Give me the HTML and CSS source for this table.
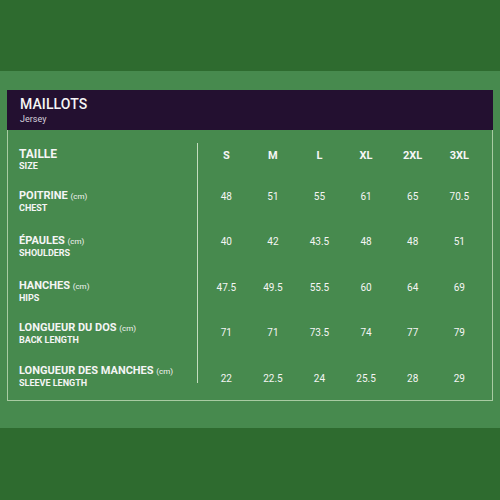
FILE: index.html
```html
<!DOCTYPE html>
<html lang="fr">
<head>
<meta charset="utf-8">
<title>Maillots</title>
<link rel="stylesheet" href="styles.css">
</head>
<body>
<div class="band">
  <div class="card">
    <div class="head">
      <div class="title">MAILLOTS</div>
      <div class="subtitle">Jersey</div>
    </div>
    <div class="table">
      <div class="label r0"><div class="main big">TAILLE</div><div class="sub">SIZE</div></div>
      <div class="divider"></div>
      <div class="size">S</div><div class="size">M</div><div class="size">L</div><div class="size">XL</div><div class="size">2XL</div><div class="size">3XL</div>

      <div class="label r1"><div class="main">POITRINE <span class="unit">(cm)</span></div><div class="sub">CHEST</div></div>
      <div class="val">48</div><div class="val">51</div><div class="val">55</div><div class="val">61</div><div class="val">65</div><div class="val">70.5</div>

      <div class="label r2"><div class="main">ÉPAULES <span class="unit">(cm)</span></div><div class="sub">SHOULDERS</div></div>
      <div class="val">40</div><div class="val">42</div><div class="val">43.5</div><div class="val">48</div><div class="val">48</div><div class="val">51</div>

      <div class="label r3"><div class="main">HANCHES <span class="unit">(cm)</span></div><div class="sub">HIPS</div></div>
      <div class="val">47.5</div><div class="val">49.5</div><div class="val">55.5</div><div class="val">60</div><div class="val">64</div><div class="val">69</div>

      <div class="label r4"><div class="main">LONGUEUR DU DOS <span class="unit">(cm)</span></div><div class="sub">BACK LENGTH</div></div>
      <div class="val">71</div><div class="val">71</div><div class="val">73.5</div><div class="val">74</div><div class="val">77</div><div class="val">79</div>

      <div class="label r5"><div class="main">LONGUEUR DES MANCHES <span class="unit">(cm)</span></div><div class="sub">SLEEVE LENGTH</div></div>
      <div class="val">22</div><div class="val">22.5</div><div class="val">24</div><div class="val">25.5</div><div class="val">28</div><div class="val">29</div>
    </div>
  </div>
</div>
</body>
</html>
```
FILE: styles.css
```css
html, body {
  margin: 0;
  padding: 0;
}
body {
  width: 500px;
  height: 500px;
  background: #2e6b2f;
  font-family: Roboto, "Liberation Sans", sans-serif;
  color: #f5f5f5;
  overflow: hidden;
}
.band {
  margin-top: 71px;
  height: 357px;
  background: #478a4e;
  padding: 19px 7px 0 7px;
  box-sizing: border-box;
}
.card {
  width: 486px;
}
.head {
  height: 40px;
  background: #231030;
  box-sizing: border-box;
  padding: 6px 0 0 13px;
}
.title {
  font-size: 14px;
  font-weight: 500;
  line-height: 16px;
  letter-spacing: 0.1px;
}
.subtitle {
  font-size: 9px;
  line-height: 12px;
  color: #d6d0dc;
  margin-top: 1px;
}
.table {
  width: 486px;
  height: 271px;
  box-sizing: border-box;
  border: 1px solid #a8cba2;
  border-top: none;
  padding: 8px 9px 0 0;
  display: grid;
  grid-template-columns: 189px 6px repeat(6, 46.6px);
  grid-template-rows: 35.5px repeat(5, 45.5px);
  align-items: center;
}
.divider {
  grid-column: 2;
  grid-row: 1 / 7;
  align-self: stretch;
  border-left: 1px solid #c3dcbe;
  margin: 5px 0 18px 0;
}
.label {
  grid-column: 1;
  padding-left: 11px;
  font-weight: 700;
}
.main {
  font-size: 11px;
  line-height: 12px;
}
.main.big {
  font-size: 12px;
  line-height: 13px;
}
.unit {
  font-size: 8px;
  font-weight: 400;
}
.sub {
  font-size: 9px;
  line-height: 11px;
}
.r0 { margin-top: 8px; }
.r1 { margin-top: 11px; }
.r2 { margin-top: 10px; }
.r3 { margin-top: 9px; }
.r4 { margin-top: 3px; }
.r5 { margin-top: -3px; }
.size {
  text-align: center;
  font-size: 11px;
  font-weight: 700;
}
.val {
  text-align: center;
  font-size: 10px;
}
```
